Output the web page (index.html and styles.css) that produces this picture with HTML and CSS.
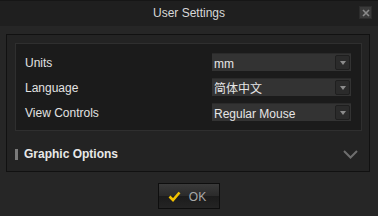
FILE: index.html
```html
<!DOCTYPE html>
<html>
<head>
<meta charset="utf-8">
<link rel="stylesheet" href="styles.css">
</head>
<body>
<div class="window">
  <div class="titlebar">
    <span></span>
    <span class="title">User Settings</span>
    <span class="close-wrap"><span class="close"><svg width="8" height="8" viewBox="0 0 8 8"><path d="M1 1L7 7M7 1L1 7" stroke="#8a8a8a" stroke-width="1.6"/></svg></span></span>
  </div>
  <div class="content">
    <div class="outer">
      <div class="inner">
        <div class="row">
          <span class="label">Units</span>
          <div class="select"><span class="val">mm</span><span class="arrow"><svg width="6" height="4" viewBox="0 0 6 4"><path d="M0 0H6L3 4Z" fill="#8c8c8c"/></svg></span></div>
        </div>
        <div class="row">
          <span class="label">Language</span>
          <div class="select"><span class="val cjk">简体中文</span><span class="arrow"><svg width="6" height="4" viewBox="0 0 6 4"><path d="M0 0H6L3 4Z" fill="#8c8c8c"/></svg></span></div>
        </div>
        <div class="row">
          <span class="label">View Controls</span>
          <div class="select"><span class="val">Regular Mouse</span><span class="arrow"><svg width="6" height="4" viewBox="0 0 6 4"><path d="M0 0H6L3 4Z" fill="#8c8c8c"/></svg></span></div>
        </div>
      </div>
      <div class="section">
        <span class="bar"></span>
        <span class="section-title">Graphic Options</span>
        <svg class="chev" width="15" height="9" viewBox="0 0 15 9"><path d="M1 1L7.5 7.5L14 1" stroke="#6e6e6e" stroke-width="2" fill="none"/></svg>
      </div>
    </div>
    <div class="footer">
      <button class="ok"><svg width="13" height="11" viewBox="0 0 13 11"><path d="M1.5 5.5L5 9L11.5 1.5" stroke="#f2c200" stroke-width="2.6" fill="none"/></svg><span>OK</span></button>
    </div>
  </div>
</div>
</body>
</html>
```
FILE: styles.css
```css
html, body {
  margin: 0;
  padding: 0;
  background: #262626;
  overflow: hidden;
}
.window {
  width: 378px;
  height: 216px;
  display: flex;
  flex-direction: column;
  font-family: "Liberation Sans", Arial, sans-serif;
  font-size: 12px;
  color: #dcdcdc;
  background: #262626;
}
.titlebar {
  height: 26px;
  flex: none;
  background: #1f1f1f;
  border-top: 1px solid #161616;
  box-sizing: border-box;
  display: grid;
  grid-template-columns: 1fr auto 1fr;
  align-items: center;
}
.title {
  color: #d8d8d8;
  font-size: 12px;
  padding-bottom: 2px;
}
.close-wrap {
  display: flex;
  justify-content: flex-end;
  padding-right: 6px;
  padding-bottom: 2px;
}
.close {
  width: 11px;
  height: 11px;
  background: #3a3a3a;
  border: 1px solid #2c2c2c;
  display: flex;
  align-items: center;
  justify-content: center;
}
.content {
  flex: 1;
  padding: 8px 8px 0 6px;
  display: flex;
  flex-direction: column;
}
.outer {
  border: 1px solid #111111;
  background: #232323;
  padding: 8px 7px 0 8px;
  height: 138px;
  box-sizing: border-box;
}
.inner {
  background: #1b1b1b;
  border: 1px solid #2f2f2f;
  padding: 9px 10px 9px 9px;
  display: flex;
  flex-direction: column;
  gap: 7px;
}
.row {
  display: flex;
  align-items: center;
  justify-content: space-between;
  height: 18px;
}
.label {
  color: #e2e2e2;
  padding-top: 2px;
}
.select {
  width: 139px;
  height: 18px;
  box-sizing: border-box;
  background: #333333;
  border-top: 1px solid #2a2a2a;
  display: flex;
  align-items: center;
  justify-content: space-between;
  padding: 0 1px 0 2px;
}
.val {
  color: #e6e6e6;
  font-size: 12px;
  padding-top: 2px;
}
.cjk {
  font-family: "Noto Sans CJK SC", sans-serif;
  font-size: 12px;
  line-height: 14px;
  padding-top: 1px;
}
.arrow {
  width: 13px;
  height: 13px;
  background: #2b2b2b;
  border: 1px solid #1f1f1f;
  border-radius: 2px;
  display: flex;
  align-items: center;
  justify-content: center;
}
.section {
  display: flex;
  align-items: center;
  height: 28px;
  margin-top: 9px;
}
.bar {
  width: 3px;
  height: 11px;
  background: #7a7a7a;
  margin-right: 6px;
}
.section-title {
  font-weight: bold;
  color: #e8e8e8;
  font-size: 12px;
  flex: 1;
}
.chev {
  margin-right: 4px;
}
.footer {
  display: flex;
  justify-content: center;
  padding-top: 11px;
}
.ok {
  width: 62px;
  height: 26px;
  box-sizing: border-box;
  border: 1px solid #0e0e0e;
  background: linear-gradient(#3a3a3a, #2a2a2a 50%, #1c1c1c 52%, #242424);
  display: flex;
  align-items: center;
  justify-content: center;
  gap: 8px;
  padding: 1px 4px 0 0;
  font-family: "Liberation Sans", Arial, sans-serif;
  font-size: 12px;
  color: #a8a8a8;
  margin-left: 2px;
}
```
